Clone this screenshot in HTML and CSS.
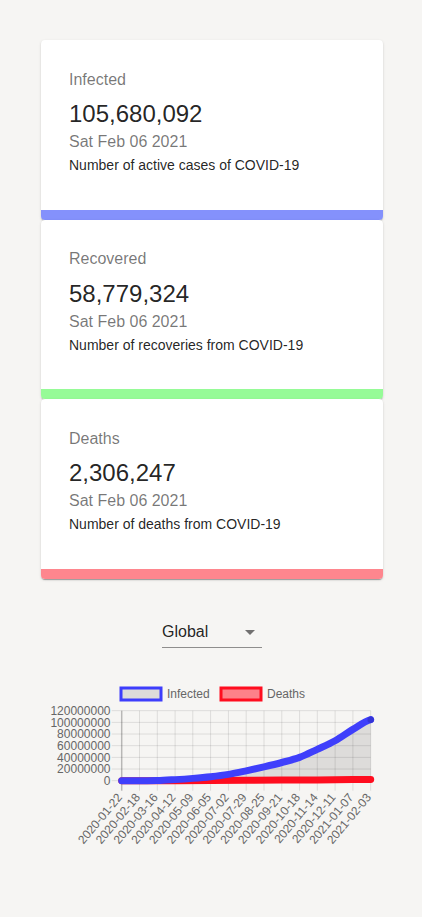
FILE: index.html
```html
<!DOCTYPE html>
<html lang="en">
<head>
<meta charset="utf-8">
<title>COVID-19 Tracker</title>
<link rel="stylesheet" href="styles.css">
</head>
<body>
<div class="page">
  <div class="cards">
    <div class="card">
      <div class="card-content">
        <div class="label">Infected</div>
        <div class="number">105,680,092</div>
        <div class="date">Sat Feb 06 2021</div>
        <div class="desc">Number of active cases of COVID-19</div>
      </div>
      <div class="band band-infected"></div>
    </div>
    <div class="card">
      <div class="card-content">
        <div class="label">Recovered</div>
        <div class="number">58,779,324</div>
        <div class="date">Sat Feb 06 2021</div>
        <div class="desc">Number of recoveries from COVID-19</div>
      </div>
      <div class="band band-recovered"></div>
    </div>
    <div class="card">
      <div class="card-content">
        <div class="label">Deaths</div>
        <div class="number">2,306,247</div>
        <div class="date">Sat Feb 06 2021</div>
        <div class="desc">Number of deaths from COVID-19</div>
      </div>
      <div class="band band-deaths"></div>
    </div>
  </div>

  <div class="picker">
    <div class="select">
      <span class="select-value">Global</span>
      <svg class="select-icon" viewBox="0 0 24 24" width="24" height="24"><path d="M7 10l5 5 5-5z"/></svg>
    </div>
  </div>

  <div class="chart">
    <svg class="chart-svg" width="342" height="171" viewBox="0 0 342 171">
      <g class="legend">
        <rect x="80" y="10" width="40" height="12" fill="rgba(0,0,0,0.1)" stroke="#3d3dfc" stroke-width="3"/>
        <text x="126" y="16" dy="0.35em">Infected</text>
        <rect x="180" y="10" width="40" height="12" fill="#fd8189" stroke="#ff0d1f" stroke-width="3"/>
        <text x="226" y="16" dy="0.35em">Deaths</text>
      </g>
      <g class="grid" stroke="rgba(0,0,0,0.1)" stroke-width="1">
        <line x1="70.7" y1="102.7" x2="329.7" y2="102.7"/>
        <line x1="70.7" y1="91.03" x2="329.7" y2="91.03"/>
        <line x1="70.7" y1="79.37" x2="329.7" y2="79.37"/>
        <line x1="70.7" y1="67.7" x2="329.7" y2="67.7"/>
        <line x1="70.7" y1="56.03" x2="329.7" y2="56.03"/>
        <line x1="70.7" y1="44.37" x2="329.7" y2="44.37"/>
        <line x1="70.7" y1="32.7" x2="329.7" y2="32.7"/>
        <line x1="98.5" y1="32.7" x2="98.5" y2="112.7"/>
        <line x1="116.3" y1="32.7" x2="116.3" y2="112.7"/>
        <line x1="134.1" y1="32.7" x2="134.1" y2="112.7"/>
        <line x1="151.8" y1="32.7" x2="151.8" y2="112.7"/>
        <line x1="169.6" y1="32.7" x2="169.6" y2="112.7"/>
        <line x1="187.4" y1="32.7" x2="187.4" y2="112.7"/>
        <line x1="205.2" y1="32.7" x2="205.2" y2="112.7"/>
        <line x1="223" y1="32.7" x2="223" y2="112.7"/>
        <line x1="240.8" y1="32.7" x2="240.8" y2="112.7"/>
        <line x1="258.6" y1="32.7" x2="258.6" y2="112.7"/>
        <line x1="276.3" y1="32.7" x2="276.3" y2="112.7"/>
        <line x1="294.1" y1="32.7" x2="294.1" y2="112.7"/>
        <line x1="311.9" y1="32.7" x2="311.9" y2="112.7"/>
        <line x1="329.7" y1="32.7" x2="329.7" y2="112.7"/>
        <line x1="80.7" y1="32.7" x2="80.7" y2="112.7" stroke="rgba(0,0,0,0.25)" stroke-width="1.5"/>
      </g>
      <g class="yticks" text-anchor="end">
        <text x="69.5" y="102.7" dy="0.35em">0</text>
        <text x="69.5" y="91.03" dy="0.35em">20000000</text>
        <text x="69.5" y="79.37" dy="0.35em">40000000</text>
        <text x="69.5" y="67.7" dy="0.35em">60000000</text>
        <text x="69.5" y="56.03" dy="0.35em">80000000</text>
        <text x="69.5" y="44.37" dy="0.35em">100000000</text>
        <text x="69.5" y="32.7" dy="0.35em">120000000</text>
      </g>
      <path class="infected-fill" d="M80.7,102.7 C86.63,102.69 92.57,102.68 98.5,102.66 C104.43,102.64 110.37,102.7 116.3,102.6 C122.23,102.43 128.17,101.99 134.1,101.62 C140.03,101.25 145.87,100.85 151.8,100.37 C157.73,99.89 163.67,99.39 169.6,98.73 C175.53,98.07 181.47,97.38 187.4,96.4 C193.33,95.42 199.27,94.1 205.2,92.84 C211.13,91.59 217.07,90.26 223,88.87 C228.93,87.48 234.87,86.08 240.8,84.5 C246.73,82.92 252.67,81.57 258.6,79.37 C264.53,77.17 270.37,74.09 276.3,71.32 C282.23,68.55 288.17,66.07 294.1,62.74 C300.03,59.42 305.97,54.88 311.9,51.37 C317.83,47.86 323.77,43.3 329.7,41.68 L329.7,102.7 L80.7,102.7 Z"/>
      <path class="deaths-line" d="M80.7,102.7 L134.1,102.64 L169.6,102.47 L205.2,102.3 L240.8,102.1 L276.3,101.9 L311.9,101.6 L329.7,101.38"/>
      <path class="infected-line" d="M80.7,102.7 C86.63,102.69 92.57,102.68 98.5,102.66 C104.43,102.64 110.37,102.7 116.3,102.6 C122.23,102.43 128.17,101.99 134.1,101.62 C140.03,101.25 145.87,100.85 151.8,100.37 C157.73,99.89 163.67,99.39 169.6,98.73 C175.53,98.07 181.47,97.38 187.4,96.4 C193.33,95.42 199.27,94.1 205.2,92.84 C211.13,91.59 217.07,90.26 223,88.87 C228.93,87.48 234.87,86.08 240.8,84.5 C246.73,82.92 252.67,81.57 258.6,79.37 C264.53,77.17 270.37,74.09 276.3,71.32 C282.23,68.55 288.17,66.07 294.1,62.74 C300.03,59.42 305.97,54.88 311.9,51.37 C317.83,47.86 323.77,43.3 329.7,41.68"/>
      <circle cx="329.7" cy="41.68" r="3.2" fill="#3434d6"/>
      <g class="xticks" text-anchor="end">
        <text transform="translate(78.7,117) rotate(-50)" dy="0.35em">2020-01-22</text>
        <text transform="translate(96.5,117) rotate(-50)" dy="0.35em">2020-02-18</text>
        <text transform="translate(114.3,117) rotate(-50)" dy="0.35em">2020-03-16</text>
        <text transform="translate(132.1,117) rotate(-50)" dy="0.35em">2020-04-12</text>
        <text transform="translate(149.8,117) rotate(-50)" dy="0.35em">2020-05-09</text>
        <text transform="translate(167.6,117) rotate(-50)" dy="0.35em">2020-06-05</text>
        <text transform="translate(185.4,117) rotate(-50)" dy="0.35em">2020-07-02</text>
        <text transform="translate(203.2,117) rotate(-50)" dy="0.35em">2020-07-29</text>
        <text transform="translate(221,117) rotate(-50)" dy="0.35em">2020-08-25</text>
        <text transform="translate(238.8,117) rotate(-50)" dy="0.35em">2020-09-21</text>
        <text transform="translate(256.6,117) rotate(-50)" dy="0.35em">2020-10-18</text>
        <text transform="translate(274.3,117) rotate(-50)" dy="0.35em">2020-11-14</text>
        <text transform="translate(292.1,117) rotate(-50)" dy="0.35em">2020-12-11</text>
        <text transform="translate(309.9,117) rotate(-50)" dy="0.35em">2021-01-07</text>
        <text transform="translate(327.7,117) rotate(-50)" dy="0.35em">2021-02-03</text>
      </g>
    </svg>
  </div>
</div>
</body>
</html>
```

FILE: styles.css
```css
html, body {
  margin: 0;
  padding: 0;
}

body {
  background: #f6f5f3;
  font-family: "Liberation Sans", Arial, Helvetica, sans-serif;
  color: rgba(0, 0, 0, 0.87);
}

.page {
  padding-top: 40px;
  padding-bottom: 60px;
}

.cards {
  width: 342px;
  margin-left: 41px;
}

.card {
  background: #fff;
  border-radius: 4px;
  overflow: hidden;
  box-shadow: 0 2px 1px -1px rgba(0, 0, 0, 0.2), 0 1px 1px 0 rgba(0, 0, 0, 0.14), 0 1px 3px 0 rgba(0, 0, 0, 0.12);
  position: relative;
}

.card-content {
  padding: 27.5px 28px 34.6px;
}

.label {
  font-size: 16px;
  line-height: 24px;
  color: rgba(0, 0, 0, 0.54);
  margin-bottom: 6.6px;
}

.number {
  font-size: 24px;
  line-height: 32px;
  color: rgba(0, 0, 0, 0.87);
}

.date {
  font-size: 16px;
  line-height: 24px;
  color: rgba(0, 0, 0, 0.54);
}

.desc {
  font-size: 14px;
  line-height: 20px;
  margin-top: 1px;
  color: rgba(0, 0, 0, 0.87);
}

.band {
  height: 10px;
}

.band-infected { background: #8491fc; }
.band-recovered { background: #96fb97; }
.band-deaths { background: #fe868e; }

.picker {
  margin-top: 37px;
  display: flex;
  justify-content: center;
  padding-left: 2px;
}

.select {
  position: relative;
  width: 100px;
  height: 32px;
  box-sizing: border-box;
  border-bottom: 1px solid rgba(0, 0, 0, 0.42);
  padding: 6px 24px 7px 0;
  font-size: 16px;
  line-height: 19px;
  color: rgba(0, 0, 0, 0.87);
}

.select-value {
  display: block;
}

.select-icon {
  position: absolute;
  right: 0;
  top: 4px;
  fill: rgba(0, 0, 0, 0.54);
}

.chart {
  margin-top: 30px;
  margin-left: 41px;
  width: 342px;
  height: 171px;
}

.chart-svg {
  display: block;
  font-family: "Liberation Sans", Arial, Helvetica, sans-serif;
  font-size: 12px;
}

.chart-svg text {
  fill: #666;
}

.infected-fill {
  fill: rgba(0, 0, 0, 0.1);
}

.infected-line {
  fill: none;
  stroke: #3f3ffb;
  stroke-width: 7;
  stroke-linecap: round;
  stroke-linejoin: round;
}

.deaths-line {
  fill: none;
  stroke: #ff0d1f;
  stroke-width: 7;
  stroke-linecap: round;
  stroke-linejoin: round;
}
```
